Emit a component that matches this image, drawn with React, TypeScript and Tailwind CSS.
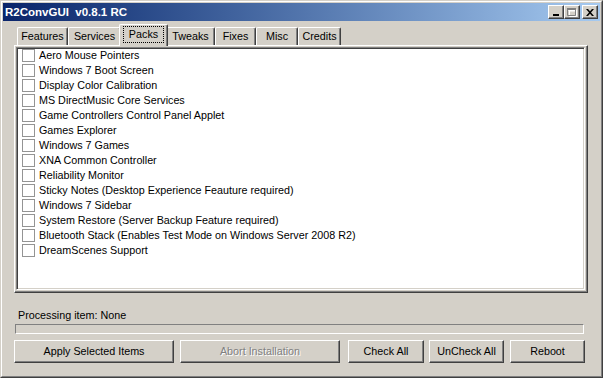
import React from "react"

const uiFont = { fontFamily: '"Liberation Sans", Arial, sans-serif' }

const packs = [
  "Aero Mouse Pointers",
  "Windows 7 Boot Screen",
  "Display Color Calibration",
  "MS DirectMusic Core Services",
  "Game Controllers Control Panel Applet",
  "Games Explorer",
  "Windows 7 Games",
  "XNA Common Controller",
  "Reliability Monitor",
  "Sticky Notes (Desktop Experience Feauture required)",
  "Windows 7 Sidebar",
  "System Restore (Server Backup Feature required)",
  "Bluetooth Stack (Enables Test Mode on Windows Server 2008 R2)",
  "DreamScenes Support",
]

const tabs = [
  { label: "Features", w: "w-[51px]" },
  { label: "Services", w: "w-[53px]" },
  { label: "Packs", w: "w-[49px]", active: true },
  { label: "Tweaks", w: "w-[49px]" },
  { label: "Fixes", w: "w-[41px]" },
  { label: "Misc", w: "w-[42px]" },
  { label: "Credits", w: "w-[43px]" },
]

function CaptionButton({ children }: { children: React.ReactNode }) {
  return (
    <div className="flex h-[14px] w-[16px] items-center justify-center border border-t-white border-l-white border-r-[#404040] border-b-[#404040] bg-[#d4d0c8] shadow-[inset_-1px_-1px_0_#808080]">
      {children}
    </div>
  )
}

function Tab({ label, w, active }: { label: string; w: string; active?: boolean }) {
  if (active) {
    return (
      <div
        className={`relative z-10 -mx-[2px] -mb-px flex h-[22px] flex-col items-center justify-start rounded-t-[2px] border-t border-l border-r border-t-white border-l-white border-r-[#404040] bg-[#d4d0c8] pt-[1px] shadow-[inset_-1px_0_0_#808080] ${w}`}
      >
        <div className="flex h-[17px] w-[41px] items-center justify-center border border-dotted border-black leading-[13px]">
          {label}
        </div>
      </div>
    )
  }
  return (
    <div
      className={`flex h-[18px] items-center justify-center rounded-t-[2px] border-t border-l border-r border-t-white border-l-white border-r-[#404040] pb-[1px] leading-[13px] shadow-[inset_-1px_0_0_#808080] ${w}`}
    >
      {label}
    </div>
  )
}

function Button({ label, className, disabled }: { label: string; className: string; disabled?: boolean }) {
  return (
    <div
      className={`flex h-[23px] items-center justify-center border border-t-white border-l-white border-r-[#404040] border-b-[#404040] shadow-[inset_-1px_-1px_0_#808080] leading-[13px] ${className}`}
    >
      {disabled ? (
        <span className="text-[#808080] [text-shadow:1px_1px_0_#ffffff]">{label}</span>
      ) : (
        <span className="text-black">{label}</span>
      )}
    </div>
  )
}

export default function App() {
  return (
    <div
      className="h-[378px] w-[603px] border border-t-[#d4d0c8] border-l-[#d4d0c8] border-r-[#404040] border-b-[#404040] text-[10.75px] text-black"
      style={uiFont}
    >
      <div className="flex h-full flex-col border border-t-white border-l-white border-r-[#808080] border-b-[#808080] bg-[#d4d0c8] p-px">
        {/* title bar */}
        <div className="flex h-[18px] items-center bg-gradient-to-r from-[#0a246a] to-[#a6caf0] pl-[2px] pr-[2px]">
          <span className="whitespace-pre text-[11.5px] font-bold leading-[14px] text-white">R2ConvGUI  v0.8.1 RC</span>
          <div className="ml-auto flex items-center">
            <CaptionButton>
              <svg width="8" height="8" viewBox="0 0 8 8">
                <rect x="1" y="6" width="6" height="2" fill="#000" />
              </svg>
            </CaptionButton>
            <CaptionButton>
              <svg width="10" height="9" viewBox="0 0 10 9">
                <path d="M1.5 1.5h7v6h-7z M1 1h8v1H1z" fill="none" stroke="#ffffff" strokeWidth="1" transform="translate(1 1)" />
                <path d="M0.5 0.5h8v7h-8z" fill="none" stroke="#808080" strokeWidth="1" />
                <rect x="0" y="0" width="9" height="2" fill="#808080" />
              </svg>
            </CaptionButton>
            <div className="ml-[2px]">
              <CaptionButton>
                <svg width="8" height="7" viewBox="0 0 8 7">
                  <path d="M0 0h2l2 2.2L6 0h2L5 3.5 8 7H6L4 4.8 2 7H0l3-3.5z" fill="#000" />
                </svg>
              </CaptionButton>
            </div>
          </div>
        </div>

        {/* tabs */}
        <div className="ml-[11px] mr-[12px] flex flex-col">
          <div className="flex h-[24px] items-end pl-[3px]">
            {tabs.map((t) => (
              <Tab key={t.label} label={t.label} w={t.w} active={t.active} />
            ))}
          </div>
          <div className="flex h-[248px] border border-t-white border-l-white border-r-[#404040] border-b-[#404040] p-px pr-[2px] pb-[2px] shadow-[inset_-1px_-1px_0_#808080]">
            <div className="flex-1 border border-t-[#808080] border-l-[#808080] border-r-white border-b-white bg-white p-px shadow-[inset_1px_1px_0_#404040,inset_-1px_-1px_0_#d4d0c8]">
              {packs.map((p) => (
                <div key={p} className="flex h-[15px] items-start">
                  <div className="ml-[4px] h-[13px] w-[13px] shrink-0 border border-[#949494] bg-white" />
                  <span className="ml-[4px] whitespace-nowrap leading-[13px]">{p}</span>
                </div>
              ))}
            </div>
          </div>
        </div>

        {/* status */}
        <div className="ml-[15px] mt-[16px] leading-[13px]">Processing item: None</div>
        <div className="ml-[12px] mt-[2px] h-[10px] w-[569px] border border-t-[#808080] border-l-[#808080] border-r-white border-b-white" />

        {/* buttons */}
        <div className="ml-[11px] mt-[6px] flex">
          <Button label="Apply Selected Items" className="w-[160px]" />
          <Button label="Abort Installation" className="ml-[6px] w-[160px]" disabled />
          <Button label="Check All" className="ml-[8px] w-[76px]" />
          <Button label="UnCheck All" className="ml-[5px] w-[75px]" />
          <Button label="Reboot" className="ml-[6px] w-[75px]" />
        </div>
      </div>
    </div>
  )
}
